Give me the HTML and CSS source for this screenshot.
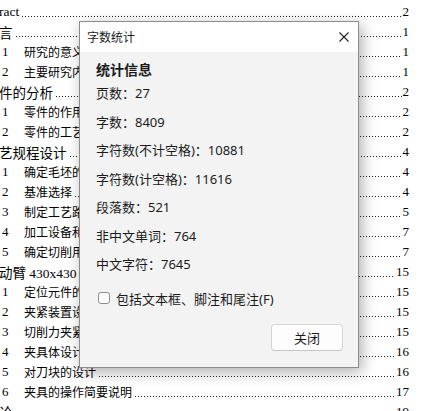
FILE: index.html
```html
<!DOCTYPE html>
<html lang="zh-CN">
<head>
<meta charset="utf-8">
<title>字数统计</title>
<link rel="stylesheet" href="styles.css">
</head>
<body>
<div class="toc">
  <div class="row top"><span class="t">ract</span><span class="dots"></span><span class="pg">2</span></div>
  <div class="row top"><span class="t">言</span><span class="dots"></span><span class="pg">1</span></div>
  <div class="row sub"><span class="num">1</span><span class="t">研究的意义</span><span class="dots"></span><span class="pg">1</span></div>
  <div class="row sub"><span class="num">2</span><span class="t">主要研究内容</span><span class="dots"></span><span class="pg">1</span></div>
  <div class="row top"><span class="t">件的分析</span><span class="dots"></span><span class="pg">2</span></div>
  <div class="row sub"><span class="num">1</span><span class="t">零件的作用</span><span class="dots"></span><span class="pg">2</span></div>
  <div class="row sub"><span class="num">2</span><span class="t">零件的工艺分析</span><span class="dots"></span><span class="pg">2</span></div>
  <div class="row top"><span class="t">艺规程设计</span><span class="dots"></span><span class="pg">4</span></div>
  <div class="row sub"><span class="num">1</span><span class="t">确定毛坯的制造形式</span><span class="dots"></span><span class="pg">4</span></div>
  <div class="row sub"><span class="num">2</span><span class="t">基准选择</span><span class="dots"></span><span class="pg">4</span></div>
  <div class="row sub"><span class="num">3</span><span class="t">制定工艺路线</span><span class="dots"></span><span class="pg">5</span></div>
  <div class="row sub"><span class="num">4</span><span class="t">加工设备和工艺装备</span><span class="dots"></span><span class="pg">7</span></div>
  <div class="row sub"><span class="num">5</span><span class="t">确定切削用量及基本工时</span><span class="dots"></span><span class="pg">7</span></div>
  <div class="row top"><span class="t">动臂 430x430 夹具设计</span><span class="dots"></span><span class="pg">15</span></div>
  <div class="row sub"><span class="num">1</span><span class="t">定位元件的设计</span><span class="dots"></span><span class="pg">15</span></div>
  <div class="row sub"><span class="num">2</span><span class="t">夹紧装置设计</span><span class="dots"></span><span class="pg">15</span></div>
  <div class="row sub"><span class="num">3</span><span class="t">切削力夹紧力计算</span><span class="dots"></span><span class="pg">15</span></div>
  <div class="row sub"><span class="num">4</span><span class="t">夹具体设计</span><span class="dots"></span><span class="pg">16</span></div>
  <div class="row sub"><span class="num">5</span><span class="t">对刀块的设计</span><span class="dots"></span><span class="pg">16</span></div>
  <div class="row sub"><span class="num">6</span><span class="t">夹具的操作简要说明</span><span class="dots"></span><span class="pg">17</span></div>
  <div class="row top"><span class="t">论</span><span class="dots"></span><span class="pg">19</span></div>
</div>

<div class="dialog">
  <div class="titlebar">
    <span class="title">字数统计</span>
    <svg class="close" width="10" height="10" viewBox="0 0 10 10"><path d="M0.5 0.5L9.5 9.5M9.5 0.5L0.5 9.5" stroke="#222" stroke-width="1.1" fill="none"/></svg>
  </div>
  <div class="dbody">
    <div class="heading">统计信息</div>
    <div class="stats">
      <div class="stat">页数：27</div>
      <div class="stat">字数：8409</div>
      <div class="stat">字符数(不计空格)：10881</div>
      <div class="stat">字符数(计空格)：11616</div>
      <div class="stat">段落数：521</div>
      <div class="stat">非中文单词：764</div>
      <div class="stat">中文字符：7645</div>
    </div>
    <label class="check"><span class="box"></span><span>包括文本框、脚注和尾注(F)</span></label>
    <div class="actions"><button class="btn">关闭</button></div>
  </div>
</div>
</body>
</html>
```
FILE: styles.css
```css
html, body {
  margin: 0;
  padding: 0;
  background: #ffffff;
  overflow: hidden;
}

.toc {
  padding: 2px 12px 0 0;
  font-family: "Liberation Serif", "Noto Sans CJK SC", serif;
  color: #000;
}

.row {
  display: flex;
  height: 20px;
  align-items: center;
  white-space: nowrap;
}

.row.top {
  font-size: 13.5px;
}

.row.top .t {
  margin-left: -1px;
}

.row.sub {
  font-size: 12px;
}

.num {
  width: 22px;
  padding-left: 2px;
  font-size: 13px;
  flex: none;
}

.t {
  flex: none;
}

.dots {
  flex: 1;
  height: 1px;
  align-self: flex-end;
  margin: 0 1px 5px 3px;
  background-image: linear-gradient(to right, #222 1px, transparent 1px);
  background-size: 3px 1px;
  background-repeat: repeat-x;
}

.pg {
  font-size: 13px;
  flex: none;
}

.dialog {
  position: absolute;
  left: 79px;
  top: 21px;
  width: 280px;
  height: 347px;
  box-sizing: border-box;
  border: 1px solid #8c8c8c;
  background: #f3f3f3;
  box-shadow: 3px 4px 14px rgba(0, 0, 0, 0.32);
  font-family: "Noto Sans", "Noto Sans CJK SC", sans-serif;
  color: #1b1b1b;
  display: flex;
  flex-direction: column;
}

.titlebar {
  height: 30px;
  background: #ffffff;
  display: flex;
  align-items: center;
  justify-content: space-between;
  padding: 0 9px 0 7px;
  flex: none;
}

.title {
  font-size: 12px;
}

.close {
  display: block;
  margin-top: 0;
}

.dbody {
  padding: 8px 15px 0 16px;
  display: flex;
  flex-direction: column;
}

.heading {
  font-size: 14px;
  font-weight: bold;
  line-height: 20px;
  margin-bottom: 3px;
}

.stats {
  display: flex;
  flex-direction: column;
  gap: 8.5px;
}

.stat {
  font-size: 13px;
  line-height: 20px;
}

.check {
  display: flex;
  align-items: center;
  margin-top: 14px;
  height: 20px;
  font-size: 13px;
  gap: 6px;
}

.box {
  width: 12px;
  height: 12px;
  box-sizing: border-box;
  border: 1px solid #8f8f8f;
  border-radius: 3px;
  background: #fdfdfd;
  margin-left: 2px;
}

.actions {
  display: flex;
  justify-content: flex-end;
  margin-top: 16px;
}

.btn {
  width: 72px;
  height: 27px;
  box-sizing: border-box;
  border: 1px solid #d6d6d6;
  border-bottom-color: #c6c6c6;
  border-radius: 4px;
  background: #fdfdfd;
  font-family: "Noto Sans", "Noto Sans CJK SC", sans-serif;
  font-size: 13px;
  color: #1b1b1b;
  padding: 0;
}
```
